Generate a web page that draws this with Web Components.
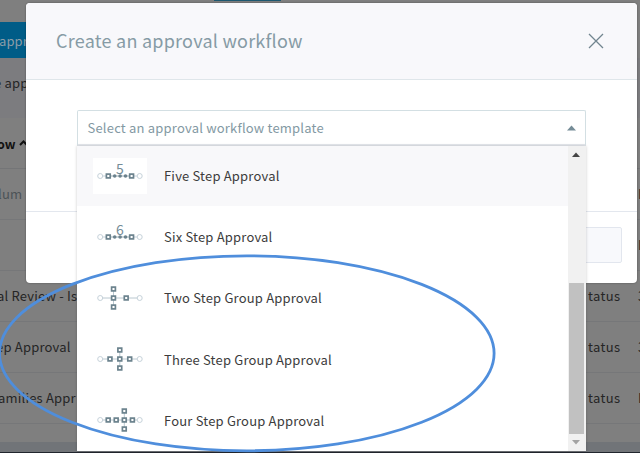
<!DOCTYPE html>
<html lang="en"><head><meta charset="utf-8"><title>Create an approval workflow</title>
<style>
html,body{margin:0;width:640px;height:453px;overflow:hidden;font-family:"Noto Sans CJK SC","Noto Sans",sans-serif}
</style></head><body>
<workflow-app></workflow-app>
<script>
const define=(name,html,after)=>customElements.define(name,class extends HTMLElement{
  constructor(){super();const t=document.createElement('template');t.innerHTML=html;
    this.attachShadow({mode:'open'}).append(t.content.cloneNode(true));}
  connectedCallback(){if(after)after(this,this.shadowRoot);}
});

define('page-row',`<style>
:host{display:flex;box-sizing:border-box;height:51px;align-items:center;justify-content:space-between;border-bottom:1px solid #767779;color:#252525;font-size:13px;line-height:20px;letter-spacing:.2px;white-space:nowrap}
.l{display:block;margin-left:var(--shift,-4px)}.r{display:grid;grid-template-columns:50px 2px;width:52px;overflow:hidden;letter-spacing:.35px}
</style><span class="l"><slot></slot></span><span class="r"><slot name="status"><span></span></slot><slot name="date"></slot></span>`);

define('page-backdrop',`<style>
:host{display:flex;flex-direction:column;width:640px;height:453px;background:#7f7f7f;overflow:hidden;white-space:nowrap}
.top{height:22px;box-sizing:border-box;flex:none;padding-left:214px}
.tab{width:67px;height:1px;background:#1d5870}
.btn{height:36px;width:60px;flex:none;background:#005c87;color:#8c9da8;font-size:13px;line-height:37px;letter-spacing:.1px;text-indent:-1px}
.sub{height:60px;flex:none;background:#7c7c7f;color:#252525;font-size:13px;line-height:50px;letter-spacing:.2px;text-indent:-6px}
.head{height:51px;box-sizing:border-box;flex:none;display:flex;align-items:center;gap:3px;border-bottom:1px solid #747577;font-weight:700;font-size:12.5px;color:#111}
.head span{margin-left:-3px}
.muted{color:#4c5357}
page-row{flex:none}
.last{height:18px;flex:none}.foot{height:10px;flex:none;background:#717478}.edge{flex:1;background:#20252d}
</style>
<div class="top"><div class="tab"></div></div>
<div class="btn">appr</div><div class="sub">e app</div>
<div class="head"><span>ow</span><svg width="9" height="6" viewBox="0 0 9 6"><path d="M1 5 4.5 1.5 8 5" fill="none" stroke="#111" stroke-width="2"/></svg></div>
<page-row style="--shift:-2px"><span class="muted">lum</span><span slot="status"></span><span slot="date">I</span></page-row>
<page-row><span slot="status"></span><span slot="date">I</span></page-row>
<page-row style="--shift:-3px">al Review - Is<span slot="status">tatus</span><span slot="date">3</span></page-row>
<page-row>ep Approval<span slot="status">tatus</span><span slot="date">3</span></page-row>
<page-row style="--shift:-2px">amilies Appr<span slot="status">tatus</span><span slot="date">I</span></page-row>
<div class="last"></div><div class="foot"></div><div class="edge"></div>`);

define('modal-dialog',`<style>
:host{display:flex;flex-direction:column;box-sizing:border-box;background:#fff;border-radius:4px;overflow:hidden;box-shadow:0 0 2px #0006}
header{height:77px;box-sizing:border-box;flex:none;display:flex;align-items:center;justify-content:space-between;padding:0 33px 0 30px;background:#f8f8fb;border-bottom:1px solid #dfe6ea;color:#869ba5;font-size:18px;letter-spacing:.24px}
header span{padding-bottom:3px}
main{height:131px;flex:none}
footer{flex:1;box-sizing:border-box;border-top:1px solid #e3e7ee;padding:15px 15px;display:flex;justify-content:flex-end}
.b{width:90px;height:36px;box-sizing:border-box;background:#f8f9fc;border:1px solid #e2e6ee;border-radius:2px}
</style><header><span><slot name="title"></slot></span><svg width="16" height="16" viewBox="0 0 16 16"><path d="m1 1 14 14M15 1 1 15" stroke="#71858f" stroke-width="1.3"/></svg></header><main></main><footer><div class="b"></div></footer>`);

define('step-icon',`<style>:host{display:block;width:54px;height:36px;background:var(--tile,transparent)}svg{display:block}text{font:14px "Noto Sans CJK SC",sans-serif;fill:#758c97}</style><svg width="54" height="36" viewBox="0 0 54 36"></svg>`,(el,root)=>{
  const k=el.getAttribute('kind'),y=18;
  const sq=(x,yy)=>`<rect x="${x-1.9}" y="${yy-1.9}" width="3.8" height="3.8" fill="#fff" stroke="#6b828d" stroke-width="1.7"/>`;
  const ring=x=>`<circle cx="${x}" cy="${y}" r="2.5" fill="#fff" stroke="#c6d2da" stroke-width="1"/>`;
  let s=`<path d="M10 ${y}H44" stroke="#bac8d0" stroke-width="1"/>`;
  if(k==='5'||k==='6'){
    s=`<path d="M10 ${y}H14M40 ${y}H44" stroke="#c6d2da"/><path d="M18 ${y}H36" stroke="#9aabb4"/>`+sq(15.3,y)+sq(38.6,y)+[21.7,27.1,32.5].map(x=>`<circle cx="${x}" cy="${y}" r="1.8" fill="#6b828d"/>`).join('')+`<text x="27" y="15.5" text-anchor="middle">${k}</text>`;
  }else{
    const d={two:[[20.5,33.2],20.5],three:[[17,26.8,36.7],26.8],four:[[15.2,23.2,31.3,39.4],31.3]}[k];
    s+=`<path d="M${d[1]} 9V27" stroke="#bac8d0"/>`+d[0].map(x=>sq(x,y)).join('')+sq(d[1],9)+sq(d[1],27);
  }
  root.querySelector('svg').innerHTML=s+ring(7.2)+ring(46.7);
});

define('template-option',`<style>
:host{display:flex;box-sizing:border-box;height:61.2px;flex:none;align-items:center;gap:17.5px;padding-left:15.5px;color:#3c3c3c;font-size:13px;letter-spacing:.19px;white-space:nowrap}
:host([active]){background:#f8f8fa;--tile:#fff}
</style><slot name="icon"></slot><span><slot></slot></span>`);

define('template-select',`<style>
:host{display:flex;flex-direction:column;box-sizing:border-box}
.field{height:36px;box-sizing:border-box;flex:none;border:1px solid #d3dfe3;border-bottom:2px solid #e6e9ee;border-radius:2px 2px 0 0;display:flex;align-items:center;justify-content:space-between;padding:0 9.5px;color:#8399a3;font-size:13px;letter-spacing:.2px;background:#fff}
.field span{padding-bottom:1px}
.menu{display:flex;flex:1;min-height:0;background:#fff;box-shadow:0 0 3px #0003;overflow:hidden}
.list{flex:1;display:flex;flex-direction:column;margin-top:-1px}
.bar{width:18px;display:flex;flex-direction:column;align-items:center;background:#f1f1f1;box-sizing:border-box;padding-right:2px}
.bar svg{margin-top:6px;flex:none}.thumb{margin-top:126px;width:15px;height:151px;background:#c1c1c1;flex:none}
</style><div class="field"><span><slot name="label"></slot></span><svg width="9" height="6" viewBox="0 0 9 6"><path d="M0 5.5 4.5 .5 9 5.5Z" fill="#758c97"/></svg></div>
<div class="menu"><div class="list"><slot></slot></div><div class="bar"><svg width="8" height="5" viewBox="0 0 8 5"><path d="M0 5 4 .5 8 5Z" fill="#444"/></svg><div class="thumb"></div><svg width="8" height="5" viewBox="0 0 8 5"><path d="M0 0 4 4.5 8 0Z" fill="#a3a3a3"/></svg></div></div>`);

define('ellipse-mark',`<style>:host{display:block;pointer-events:none}svg{display:block}</style><svg width="640" height="453" viewBox="0 0 640 453"><ellipse cx="246.8" cy="353.3" rx="247.3" ry="97.5" fill="none" stroke="#4f8edc" stroke-width="2.8"/></svg>`);

define('workflow-app',`<style>
:host{display:block;position:relative;width:640px;height:453px;overflow:hidden}
modal-dialog{position:absolute;left:26px;top:3px;width:611px;height:280px}
template-select{position:absolute;left:77px;top:110px;width:509px;height:341px}
ellipse-mark{position:absolute;left:0;top:0}
</style><page-backdrop></page-backdrop>
<modal-dialog><span slot="title">Create an approval workflow</span></modal-dialog>
<template-select><span slot="label">Select an approval workflow template</span>
<template-option active><step-icon slot="icon" kind="5"></step-icon>Five Step Approval</template-option>
<template-option><step-icon slot="icon" kind="6"></step-icon>Six Step Approval</template-option>
<template-option><step-icon slot="icon" kind="two"></step-icon>Two Step Group Approval</template-option>
<template-option><step-icon slot="icon" kind="three"></step-icon>Three Step Group Approval</template-option>
<template-option><step-icon slot="icon" kind="four"></step-icon>Four Step Group Approval</template-option>
</template-select><ellipse-mark></ellipse-mark>`);
</script></body></html>
